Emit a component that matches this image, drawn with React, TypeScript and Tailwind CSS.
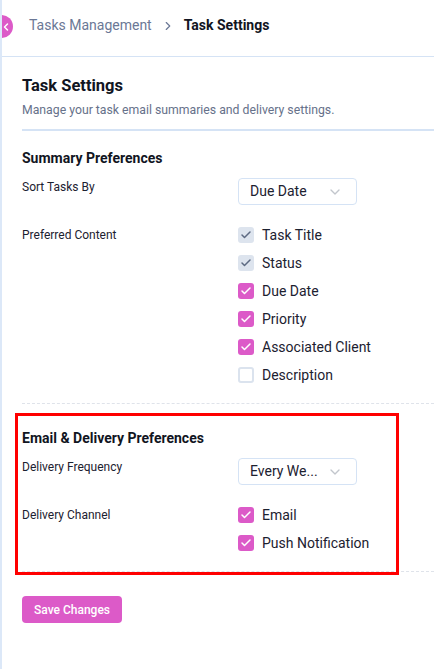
import { ChevronDown, ChevronRight, ChevronLeft, Check } from 'lucide-react';

interface Option {
    label: string;
    checked: boolean;
    locked?: boolean;
}

const content: Option[] = [
    { label: 'Task Title', checked: true, locked: true },
    { label: 'Status', checked: true, locked: true },
    { label: 'Due Date', checked: true },
    { label: 'Priority', checked: true },
    { label: 'Associated Client', checked: true },
    { label: 'Description', checked: false },
];

const channels: Option[] = [
    { label: 'Email', checked: true },
    { label: 'Push Notification', checked: true },
];

function Box({ checked, locked }: { checked: boolean; locked?: boolean }) {
    if (!checked) {
        return <span className="h-[16px] w-[16px] rounded-[3px] border-2 border-[#dbe3ee] bg-white" />;
    }
    if (locked) {
        return (
            <span className="flex h-[16px] w-[16px] items-center justify-center rounded-[3px] bg-[#dde4ee]">
                <Check size={12} strokeWidth={3} className="text-[#5d6a82]" />
            </span>
        );
    }
    return (
        <span className="flex h-[16px] w-[16px] items-center justify-center rounded-[3px] bg-[#dc5ac8]">
            <Check size={12} strokeWidth={3} className="text-white" />
        </span>
    );
}

function CheckList({ items }: { items: Option[] }) {
    return (
        <div className="flex flex-col">
            {items.map((o) => (
                <div key={o.label} className="flex h-[28px] items-center gap-[8px]">
                    <Box checked={o.checked} locked={o.locked} />
                    <span className="text-[14px] text-[#1c2130]">{o.label}</span>
                </div>
            ))}
        </div>
    );
}

function Select({ value }: { value: string }) {
    return (
        <div className="flex h-[27px] w-[119px] items-center justify-between rounded-[4px] border border-[#d5e3f5] pl-[11px] pr-[13px]">
            <span className="text-[14px] text-[#1c2130]">{value}</span>
            <ChevronDown size={16} strokeWidth={2} className="text-[#c2c6cc]" />
        </div>
    );
}

export default function App() {
    return (
        <div className="relative min-h-[669px] w-[434px] overflow-hidden border-l-2 border-[#dce8f8] bg-white font-['Roboto',sans-serif]">
            {/* collapse toggle */}
            <div className="absolute left-[-12px] top-[15px] flex h-[23px] w-[23px] items-center justify-end rounded-full bg-[#dc5ac8] pr-[1px]">
                <ChevronLeft size={12} strokeWidth={3} className="text-white" />
            </div>

            <header className="flex h-[57px] items-center gap-[9px] border-b border-[#d5e3f5] pb-[5px] pl-[27px]">
                <span className="text-[14px] text-[#6b7896]">Tasks Management</span>
                <ChevronRight size={14} strokeWidth={2} className="text-[#6b7896]" />
                <span className="text-[14px] font-bold text-[#111522]">Task Settings</span>
            </header>

            <main className="pl-[20px] pt-[17px]">
                <div className="border-b-2 border-[#d5e3f5] pb-[10px]">
                    <h1 className="text-[16.5px] font-bold leading-[24px] text-[#111522]">Task Settings</h1>
                    <p className="mt-[3px] text-[12.25px] leading-[18px] text-[#66718a]">
                        Manage your task email summaries and delivery settings.
                    </p>
                </div>

                <section className="border-b border-dashed border-[#dfe3ea] pb-[14px] pt-[17px]">
                    <h2 className="text-[14px] font-bold leading-[20px] text-[#111522]">Summary Preferences</h2>
                    <div className="mt-[10px] flex items-start">
                        <span className="w-[216px] pt-[1px] text-[12px] leading-[16px] text-[#1c2130]">Sort Tasks By</span>
                        <Select value="Due Date" />
                    </div>
                    <div className="mt-[16px] flex items-start">
                        <span className="w-[216px] pt-[6px] text-[12px] leading-[16px] text-[#1c2130]">Preferred Content</span>
                        <CheckList items={content} />
                    </div>
                </section>

                <section className="border-b border-dashed border-[#dfe3ea] pb-[14px] pt-[24px]">
                    <h2 className="text-[14px] font-bold leading-[20px] text-[#111522]">Email &amp; Delivery Preferences</h2>
                    <div className="mt-[10px] flex items-start">
                        <span className="w-[216px] pt-[1px] text-[12px] leading-[16px] text-[#1c2130]">Delivery Frequency</span>
                        <Select value="Every We..." />
                    </div>
                    <div className="mt-[16px] flex items-start">
                        <span className="w-[216px] pt-[6px] text-[12px] leading-[16px] text-[#1c2130]">Delivery Channel</span>
                        <CheckList items={channels} />
                    </div>
                </section>

                <button className="mt-[24px] h-[27px] w-[100px] rounded-[4px] bg-[#dc5ac8] text-[12px] font-medium text-white">
                    Save Changes
                </button>
            </main>

            {/* highlight annotation */}
            <div className="pointer-events-none absolute left-[13px] top-[413px] h-[162px] w-[384px] border-[3px] border-[#ff0000]" />
        </div>
    );
}
